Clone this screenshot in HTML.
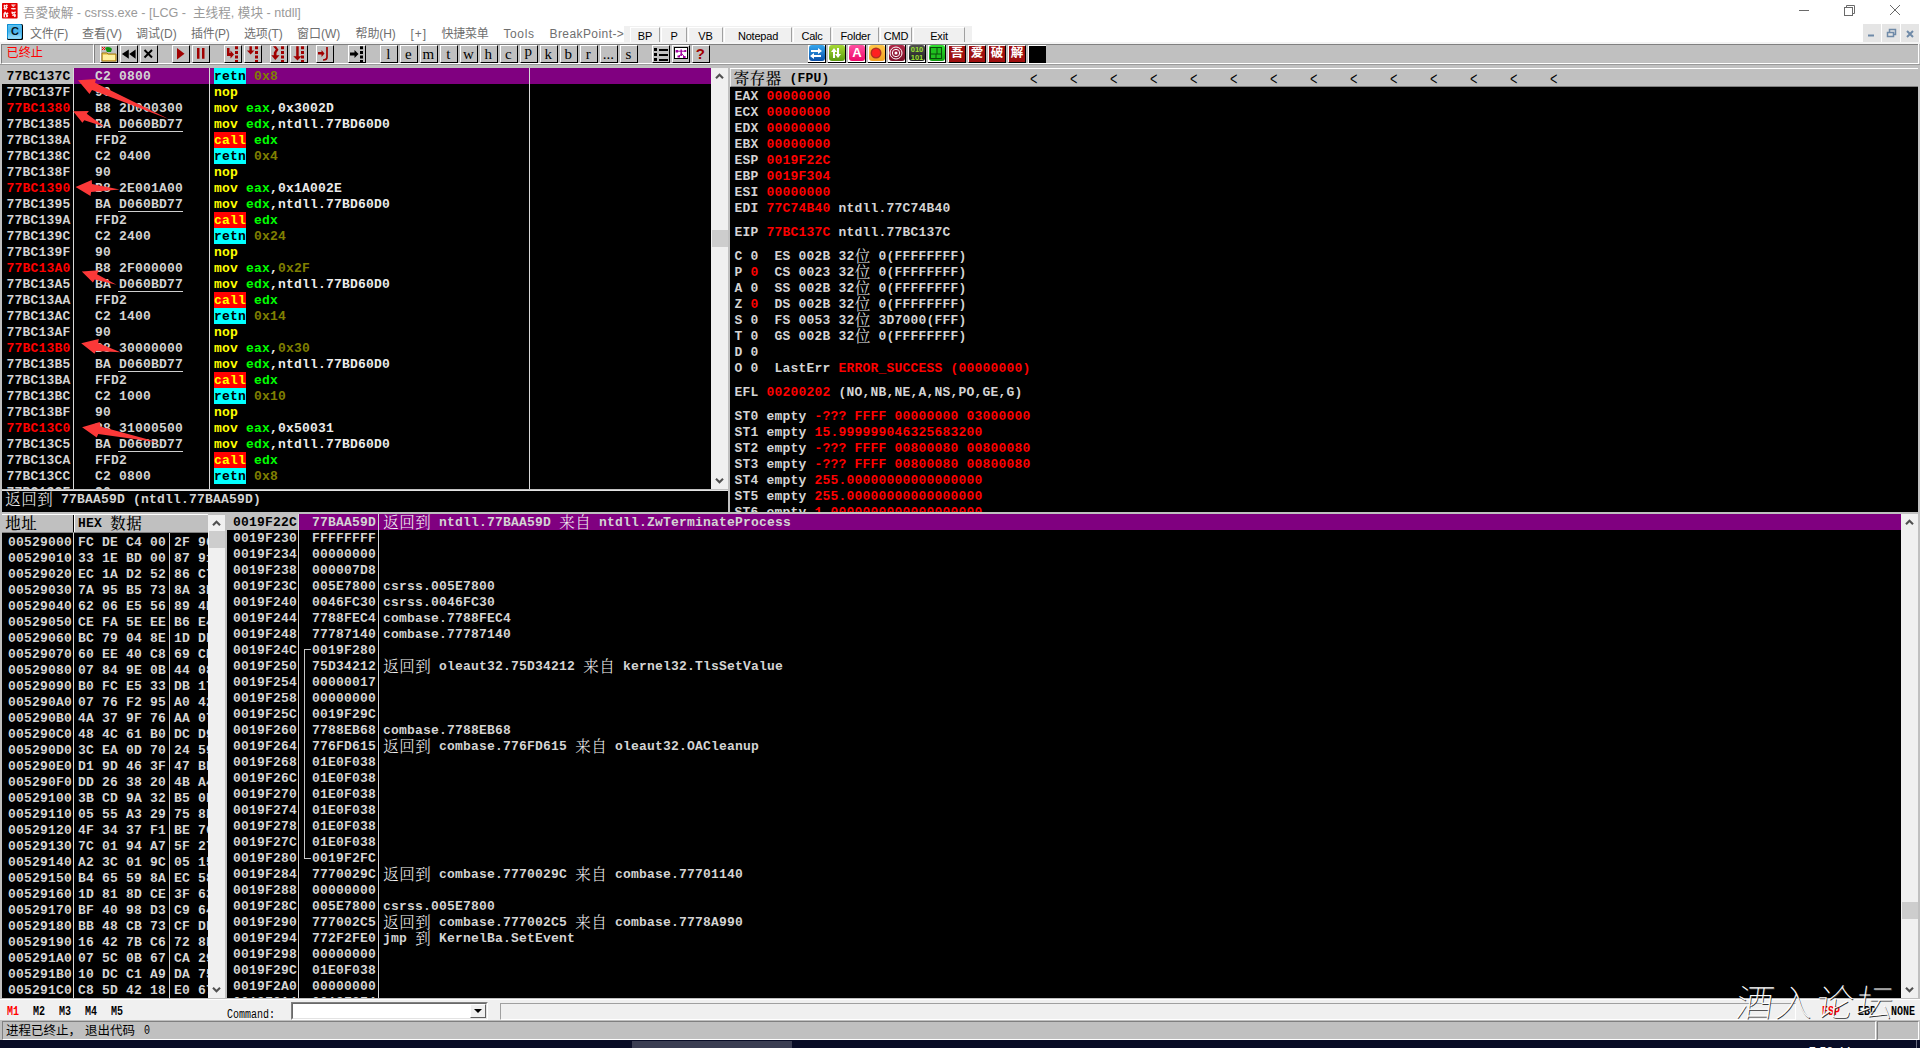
<!DOCTYPE html><html><head><meta charset="utf-8"><title>OllyDbg</title><style>
*{box-sizing:border-box;margin:0;padding:0}
html,body{width:1920px;height:1048px;overflow:hidden;background:#fff}
body{position:relative;font-family:"Liberation Sans","Noto Sans CJK SC",sans-serif;font-size:12px;color:#000}
.abs{position:absolute}
.mono{font-family:"Liberation Mono","Noto Serif CJK SC",monospace;font-weight:bold;font-size:13px;line-height:16px;white-space:pre;color:#d4d4d4;letter-spacing:0.2px}
.cj{font-family:"Liberation Serif","Noto Serif CJK SC","Noto Sans CJK SC",serif;font-weight:300;font-size:15.5px;display:inline-block;letter-spacing:0.5px;padding-left:0.25px;margin-right:-0.25px;line-height:16px;vertical-align:top;position:relative;top:0.3px;color:#f4f4f4}
.kk .cj{color:#000;font-weight:500}
.ss{position:absolute;font:12px/14px "Liberation Mono",monospace;transform:scaleX(.8333);transform-origin:0 0;white-space:pre;color:#000}
.row{position:absolute;left:0;height:16px;width:100%}
.row span.c{position:absolute;top:1px;height:16px}
.row span.bg{top:0}
.pane{position:absolute;background:#000;overflow:hidden}
.vl{position:absolute;width:1px;background:#d8d8d8;top:0;bottom:0}
.y{color:#ffff00}.g{color:#00ff00}.o{color:#808000}.w{color:#ececec}.r{color:#ff0000}.k{color:#000}
.call{background:#ff0000;color:#ffff00}
.retn{background:#00ffff;color:#000}
.sel{background:#800080}
.u{border-bottom:1px solid #d0d0d0;height:15px!important;margin-left:-1px;padding-left:1px}
.sb{position:absolute;background:#f0f0f0}
.sb .th{position:absolute;left:1px;right:0;background:#cdcdcd}
.sb svg{position:absolute;left:0}
.tb{position:absolute;top:45px;width:18px;height:18px;background:#c0c0c0;border:1px solid;border-color:#fff #000 #000 #fff;overflow:hidden}
.tb b{position:absolute;left:-0.7px;top:-0.4px;width:16px;text-align:center;font-family:"Liberation Serif",serif;font-weight:normal;font-size:15px;line-height:16px;color:#000}
.mb{position:absolute;top:27px;height:18px;background:#f0f0f0;border:1px solid;border-color:#fff #a0a0a0 #a0a0a0 #fff;font-size:11px;line-height:17px;text-align:center;color:#000;letter-spacing:-0.2px}
.menu span{position:absolute;top:25.5px;line-height:16px;font-size:12px;color:#6f6f6f;white-space:pre}
</style></head><body>
<div class="abs" style="left:0;top:0;width:1920px;height:44px;background:#fff"></div>
<svg class="abs" style="left:2px;top:3px" width="16" height="16" viewBox="0 0 16 16"><rect x="0" y="0" width="15.6" height="15.6" rx="0.8" fill="#e40000"/><g fill="#fff" opacity="0.92"><path d="M1.5 2.5l1-1 1 .8 1.2-1 1.3 1-1 1.2 1 1-1.2 1 .4 1.2-1.4-.3-1 .8-.6-1.2-1-.3.8-1.2z"/><path d="M9.2 1.6h4.6l-.6 1-1.2.2.4 1-1.5.4-.5-1.3-.9-.3zM9 5h4.500l.3 1.200-2 .2-2.500-.1z"/><path d="M1.500 10.500l1.600-2.200 1.300 1.600 1.500-.6.600 1.400-1.300.6 1 1.300-.500 1.700h-4.200z"/><path d="M9.500 8.500l2.300.6 1.700-.9.300 1.500-1.300.9 1.300 1 .1 1.800-1.500.8-.800-1.400-1.700.3.900-1.500-1.400-1.300z"/></g><g fill="#e40000"><rect x="3" y="11.500" width="1" height="2.500"/><rect x="10.800" y="2.600" width="0.800" height="0.800"/><rect x="3" y="3.400" width="1" height="1"/><rect x="11.300" y="10.300" width="0.900" height="0.900"/></g></svg>
<div class="abs" style="left:23px;top:4.5px;font-size:12.6px;line-height:17px;color:#9a9a9a;white-space:pre">吾愛破解 - csrss.exe - [LCG -  主线程, 模块 - ntdll]</div>
<svg class="abs" style="left:1790px;top:0" width="130" height="22" viewBox="0 0 130 22" fill="none" stroke="#6a6a6a" stroke-width="1"><path d="M9 10.5H19"/><rect x="54.5" y="7.5" width="8" height="8"/><path d="M56.5 7.5V5.5H64.5V13.5H62.5"/><path d="M100 5L110 15M110 5L100 15"/></svg>
<div class="abs" style="left:7px;top:24px;width:16px;height:16px;border-radius:1.5px;background:#000"></div><div class="abs" style="left:7px;top:24px;width:15px;height:15px;border-radius:1.5px;background:linear-gradient(#5cc0f0,#48b4ec 50%,#9adcf8);border:1px solid;border-color:#0a94dc #48b4ec #7fd0f4 #0a94dc"></div>
<div class="abs" style="left:7px;top:24px;width:16px;height:16px;font:bold 11px/15px 'Liberation Sans',sans-serif;color:#041420;text-align:center">C</div>
<div class="menu">
<span style="left:30px;letter-spacing:-0.3px">文件(F)</span>
<span style="left:82px;letter-spacing:0px">查看(V)</span>
<span style="left:136px;letter-spacing:0px">调试(D)</span>
<span style="left:191px;letter-spacing:-0.3px">插件(P)</span>
<span style="left:244px;letter-spacing:-0.15px">选项(T)</span>
<span style="left:297px;letter-spacing:0px">窗口(W)</span>
<span style="left:355.5px;letter-spacing:-0.1px">帮助(H)</span>
<span style="left:410.5px;letter-spacing:0.9px">[+]</span>
<span style="left:441.5px;letter-spacing:-0.25px">快捷菜单</span>
<span style="left:503.5px;letter-spacing:0.6px">Tools</span>
<span style="left:549.5px;letter-spacing:0.42px">BreakPoint-&gt;</span>
</div>
<div class="abs" style="left:624px;top:26px;width:348px;height:19px;background:#f0f0f0"></div>
<div class="mb" style="left:630px;width:30px">BP</div>
<div class="mb" style="left:661px;width:26px">P</div>
<div class="mb" style="left:688px;width:35px">VB</div>
<div class="mb" style="left:724px;width:68px">Notepad</div>
<div class="mb" style="left:793px;width:38px">Calc</div>
<div class="mb" style="left:832px;width:47px">Folder</div>
<div class="mb" style="left:880px;width:32px">CMD</div>
<div class="mb" style="left:913px;width:52px">Exit</div>
<div class="abs" style="left:1863px;top:24px;width:18px;height:18px;background:#e5e5e5"></div>
<div class="abs" style="left:1882px;top:24px;width:18px;height:18px;background:#e5e5e5"></div>
<div class="abs" style="left:1901px;top:24px;width:18px;height:18px;background:#e5e5e5"></div>
<svg class="abs" style="left:1863px;top:24px" width="56" height="18" viewBox="0 0 56 18" fill="none" stroke="#6f8aa8"><path d="M5 11.5H11" stroke-width="2"/><path d="M24.5 8.5H30.5V12.5H24.5Z M26.5 8V5.5H32.5V10.5H31" stroke-width="1.5"/><path d="M44 7L50 13M50 7L44 13" stroke-width="2"/></svg>
<div class="abs" style="left:0;top:42px;width:1920px;height:27px;background:#c0c0c0"></div>
<div class="abs" style="left:0;top:42px;width:1920px;height:2px;background:#f4f4f4"></div>
<div class="abs" style="left:0;top:44px;width:1918px;height:1px;background:#808080"></div>
<div class="abs" style="left:0;top:63px;width:1919px;height:1px;background:#fff"></div>
<div class="abs" style="left:1918px;top:44px;width:1px;height:20px;background:#fff"></div>
<div class="abs" style="left:0;top:64px;width:1920px;height:1px;background:#9a9a9a"></div>
<div class="abs" style="left:730px;top:68px;width:1188px;height:1px;background:#fff"></div>
<div class="abs" style="left:1px;top:44px;width:93px;height:20px;border:1px solid;border-color:#808080 #fff #fff #808080"></div>
<div class="abs" style="left:6.5px;top:45.200px;font-size:12.200px;line-height:17px;color:#ff0000;font-family:'Liberation Sans','Noto Sans CJK SC',sans-serif;font-weight:400;letter-spacing:0">已终止</div>
<div class="abs" style="left:94px;top:44px;width:1px;height:19px;background:#808080"></div>
<div class="abs" style="left:0;top:42px;width:1px;height:22px;background:#f0f0f0"></div>
<div class="tb" style="left:100px"><svg width="16" height="16" viewBox="0 0 16 16" style="position:absolute;left:0;top:0" ><path d="M1 7h5l1 1h8v7H1z" fill="#f4d060" stroke="#a07810" stroke-width="1"/><path d="M2 9h12v5H2z" fill="#fff0a0"/><path d="M4 2c2-2 6-1 7 1l-1 3H6z" fill="#109010"/><path d="M1 1l3 3M1 4l3-3" stroke="#f00" stroke-width="1"/></svg></div>
<div class="tb" style="left:120px"><svg width="16" height="16" viewBox="0 0 16 16" style="position:absolute;left:0;top:0" ><path d="M7.8 3.4v9.4L0.9 8.1zM14.6 3.4v9.4L8.2 8.1z" fill="#000"/></svg></div>
<div class="tb" style="left:140px"><svg width="16" height="16" viewBox="0 0 16 16" style="position:absolute;left:0;top:0" ><path d="M3.5 4l7.5 7.5M11 4l-7.5 7.5" stroke="#000" stroke-width="2"/></svg></div>
<div class="tb" style="left:172px"><svg width="16" height="16" viewBox="0 0 16 16" style="position:absolute;left:0;top:0" ><path d="M4 2v11.5l7.5-5.75z" fill="#a00000"/></svg></div>
<div class="tb" style="left:192px"><svg width="16" height="16" viewBox="0 0 16 16" style="position:absolute;left:0;top:0" ><path d="M4 2h2.5v10.8H4zM9 2h2.5v10.8H9z" fill="#a00000"/></svg></div>
<div class="tb" style="left:224px"><svg width="16" height="16" viewBox="0 0 16 16" style="position:absolute;left:0;top:0" ><path d="M2 2h2.5v5h1V4.5L9 8.5l-3.5 4V10H2z" fill="#a00000"/><path d="M10 0.3h3v3h-3zM10 4.9h3v3h-3zM10 9.5h3v3h-3zM10 14.1h3v2h-3z" fill="#a00000"/></svg></div>
<div class="tb" style="left:244px"><svg width="16" height="16" viewBox="0 0 16 16" style="position:absolute;left:0;top:0" ><path d="M4.4 0.3h2.5v4.3h2.5L5.65 8.6 1.9 4.6h2.5z" fill="#a00000"/><path d="M10 0.3h3v3h-3zM10 4.9h3v3h-3zM10 9.5h3v3h-3zM10 14.1h3v2h-3z" fill="#a00000"/></svg></div>
<div class="tb" style="left:270px"><svg width="16" height="16" viewBox="0 0 16 16" style="position:absolute;left:0;top:0" ><path d="M2 0.3h3l2.5 3.5-2 3v2.5h3L4.3 14 0.3 9.3h2.5V6.5l2-3z" fill="#a00000"/><path d="M10 0.3h3v3h-3zM10 4.9h3v3h-3zM10 9.5h3v3h-3zM10 14.1h3v2h-3z" fill="#a00000"/></svg></div>
<div class="tb" style="left:290px"><svg width="16" height="16" viewBox="0 0 16 16" style="position:absolute;left:0;top:0" ><path d="M5.2 0.3h2.5v10h2.8L6.5 14.6 2.3 10.3h2.9z" fill="#a00000"/><path d="M10 0.3h3v3h-3zM10 4.9h3v3h-3zM10 9.5h3v3h-3zM10 14.1h3v2h-3z" fill="#a00000"/></svg></div>
<div class="tb" style="left:316px"><svg width="16" height="16" viewBox="0 0 16 16" style="position:absolute;left:0;top:0" ><path d="M1 6h3.5V4l3 3.5-3 3.5V8.5H1z" fill="#a00000"/><path d="M10 1v10q0 3-4 3" stroke="#a00000" stroke-width="1.7" fill="none"/></svg></div>
<div class="tb" style="left:348px"><svg width="16" height="16" viewBox="0 0 16 16" style="position:absolute;left:0;top:0" ><path d="M1 6.5h4.5V4l4 4-4 4V9.5H1z" fill="#000"/><path d="M11 0.3h3v3h-3zM11 4.9h3v3h-3zM11 9.5h3v3h-3zM11 14.1h3v2h-3z" fill="#000"/></svg></div>
<div class="tb" style="left:380px"><b>l</b></div>
<div class="tb" style="left:400px"><b>e</b></div>
<div class="tb" style="left:420px"><b>m</b></div>
<div class="tb" style="left:440px"><b>t</b></div>
<div class="tb" style="left:460px"><b>w</b></div>
<div class="tb" style="left:480px"><b>h</b></div>
<div class="tb" style="left:500px"><b>c</b></div>
<div class="tb" style="left:520px"><b style="top:-3.500px">p</b></div>
<div class="tb" style="left:540px"><b>k</b></div>
<div class="tb" style="left:560px"><b>b</b></div>
<div class="tb" style="left:580px"><b>r</b></div>
<div class="tb" style="left:600px"><b>...</b></div>
<div class="tb" style="left:620px"><b>s</b></div>
<div class="tb" style="left:652px"><svg width="16" height="16" viewBox="0 0 16 16" style="position:absolute;left:0;top:0" ><path d="M1 2h3v3H1zM6 3h9v2H6zM1 7h3v3H1zM6 8h9v2H6zM1 12h3v3H1zM6 13h9v2H6z" fill="#000"/></svg></div>
<div class="tb" style="left:672px"><svg width="16" height="16" viewBox="0 0 16 16" style="position:absolute;left:0;top:0" ><rect x="1.500" y="1.500" width="13" height="11" fill="#fff" stroke="#000"/><g fill="#a000a0"><rect x="2.600" y="4" width="2.500" height="2.500"/><rect x="11.300" y="4" width="2" height="2"/><rect x="4.500" y="9.500" width="2.500" height="2"/><rect x="10" y="10" width="2.600" height="2"/><rect x="7.500" y="3.500" width="1.400" height="6.500"/></g><path d="M4 5.200h8.500M8.200 7l3 3.500M8.200 8.500L6 10" stroke="#a000a0" stroke-width="1" fill="none"/></svg></div>
<div class="tb" style="left:692px"><b style="color:#a00000;font-family:'Liberation Sans',sans-serif;font-weight:bold;font-size:15px">?</b></div>
<div class="abs" style="left:808px;top:45px;width:18px;height:18px;background:#fff;border-right:1px solid #000;border-bottom:1px solid #000"><div style="position:absolute;left:1px;top:0;width:16px;height:16px;border-radius:3px;background:linear-gradient(#35a7ee,#0a4fa8)"></div><svg width="16" height="16" viewBox="0 0 16 16" style="position:absolute;left:0;top:0" style="left:1px"><path d="M3 5h7V3l4 3-4 3V7H3zM13 10H6V8l-4 3 4 3v-2h7z" fill="#fff"/></svg></div>
<div class="abs" style="left:828px;top:45px;width:18px;height:18px;background:#fff;border-right:1px solid #000;border-bottom:1px solid #000"><div style="position:absolute;left:1px;top:0;width:16px;height:16px;border-radius:3px;background:linear-gradient(#a6d934,#5c9c10)"></div><svg width="16" height="16" viewBox="0 0 16 16" style="position:absolute;left:0;top:0" style="left:1px"><path d="M5 13V7H3l3-4 3 4H7v6zM9 3v6H7l3 4 3-4h-2V3z" fill="#fff"/></svg></div>
<div class="abs" style="left:848px;top:45px;width:18px;height:18px;background:#fff;border-right:1px solid #000;border-bottom:1px solid #000"><div style="position:absolute;left:1px;top:0;width:16px;height:16px;border-radius:3px;background:linear-gradient(#ff4fa0,#ee0a6a)"></div><div style="position:absolute;left:1px;top:0;width:16px;height:16px;font:bold 13px/16px 'Liberation Sans',sans-serif;color:#fff;text-align:center">A</div></div>
<div class="abs" style="left:868px;top:45px;width:18px;height:18px;background:#fff;border-right:1px solid #000;border-bottom:1px solid #000"><div style="position:absolute;left:1px;top:0;width:16px;height:16px;border-radius:3px;background:linear-gradient(#ffc84a,#f0a020)"></div><svg width="16" height="16" viewBox="0 0 16 16" style="position:absolute;left:0;top:0" style="left:1px"><circle cx="8" cy="8" r="5.5" fill="#b03020"/><circle cx="8" cy="8" r="4" fill="#ff2020"/></svg></div>
<div class="abs" style="left:888px;top:45px;width:18px;height:18px;background:#fff;border-right:1px solid #000;border-bottom:1px solid #000"><div style="position:absolute;left:1px;top:0;width:16px;height:16px;border-radius:3px;background:linear-gradient(#b02848,#7a1028)"></div><svg width="16" height="16" viewBox="0 0 16 16" style="position:absolute;left:0;top:0" style="left:1px"><circle cx="8" cy="8" r="6" fill="none" stroke="#fff"/><circle cx="8" cy="8" r="3.7" fill="none" stroke="#fff"/><circle cx="8" cy="8" r="1.5" fill="#fff"/></svg></div>
<div class="abs" style="left:908px;top:45px;width:18px;height:18px;background:#fff;border-right:1px solid #000;border-bottom:1px solid #000"><div style="position:absolute;left:1px;top:0;width:16px;height:16px;border-radius:3px;background:linear-gradient(#505050,#202020)"></div><div style="position:absolute;left:1px;top:0;width:16px;height:16px;font:bold 7.5px/7.5px 'Liberation Sans',sans-serif;color:#9be030;text-align:center;padding-top:1px">010<br>101</div></div>
<div class="abs" style="left:928px;top:45px;width:18px;height:18px;background:#fff;border-right:1px solid #000;border-bottom:1px solid #000"><div style="position:absolute;left:1px;top:0;width:16px;height:16px;border-radius:3px;background:linear-gradient(#30e030,#10a010)"></div><svg width="16" height="16" viewBox="0 0 16 16" style="position:absolute;left:0;top:0" style="left:1px"><rect x="2.5" y="2.5" width="11" height="11" fill="#20c020" stroke="#0a4a0a"/><path d="M3 9h10M9 3v6M8 9v4" stroke="#0a4a0a"/></svg></div>
<div class="abs" style="left:948px;top:45px;width:18px;height:18px;background:#a01010;border-right:1px solid #000;border-bottom:1px solid #000;border-left:1px solid #fff;border-top:1px solid #fff;font:bold 12.5px/15px 'Liberation Sans','Noto Sans CJK SC',sans-serif;color:#fff;text-align:center;overflow:hidden">吾</div>
<div class="abs" style="left:968px;top:45px;width:18px;height:18px;background:#a01010;border-right:1px solid #000;border-bottom:1px solid #000;border-left:1px solid #fff;border-top:1px solid #fff;font:bold 12.5px/15px 'Liberation Sans','Noto Sans CJK SC',sans-serif;color:#fff;text-align:center;overflow:hidden">爱</div>
<div class="abs" style="left:988px;top:45px;width:18px;height:18px;background:#a01010;border-right:1px solid #000;border-bottom:1px solid #000;border-left:1px solid #fff;border-top:1px solid #fff;font:bold 12.5px/15px 'Liberation Sans','Noto Sans CJK SC',sans-serif;color:#fff;text-align:center;overflow:hidden">破</div>
<div class="abs" style="left:1008px;top:45px;width:18px;height:18px;background:#a01010;border-right:1px solid #000;border-bottom:1px solid #000;border-left:1px solid #fff;border-top:1px solid #fff;font:bold 12.5px/15px 'Liberation Sans','Noto Sans CJK SC',sans-serif;color:#fff;text-align:center;overflow:hidden">解</div>
<div class="abs" style="left:1028px;top:45px;width:18px;height:18px;background:#000;border-left:1px solid #fff;border-top:1px solid #fff"></div>
<div class="abs" style="left:0;top:69px;width:1920px;height:931px;background:#c0c0c0"></div>
<div class="pane mono" style="left:2px;top:68px;width:709px;height:421px">
<div class="row sel" style="top:0"></div><div class="abs" style="left:0;top:0;width:71px;height:16px;background:#c0c0c0"></div>
<div class="row" style="top:0px">
<span class="c k" style="left:4.5px">77BC137C</span>
<span class="c" style="left:93px">C2 0800</span>
<span class="c bg retn" style="left:212px;line-height:18px">retn</span><span class="c o" style="left:252px">0x8</span>
</div>
<div class="row" style="top:16px">
<span class="c " style="left:4.5px">77BC137F</span>
<span class="c" style="left:93px">90</span>
<span class="c y" style="left:212px">nop</span>
</div>
<div class="row" style="top:32px">
<span class="c r" style="left:4.5px">77BC1380</span>
<span class="c" style="left:93px">B8 2D000300</span>
<span class="c y" style="left:212px">mov</span><span class="c g" style="left:244px">eax</span><span class="c w" style="left:268px">,</span><span class="c w" style="left:276px">0x3002D</span>
</div>
<div class="row" style="top:48px">
<span class="c " style="left:4.5px">77BC1385</span>
<span class="c" style="left:93px">BA </span><span class="c u" style="left:117px">D060BD77</span>
<span class="c y" style="left:212px">mov</span><span class="c g" style="left:244px">edx</span><span class="c w" style="left:268px">,</span><span class="c w" style="left:276px">ntdll.77BD60D0</span>
</div>
<div class="row" style="top:64px">
<span class="c " style="left:4.5px">77BC138A</span>
<span class="c" style="left:93px">FFD2</span>
<span class="c bg call" style="left:212px;line-height:18px">call</span><span class="c g" style="left:252px">edx</span>
</div>
<div class="row" style="top:80px">
<span class="c " style="left:4.5px">77BC138C</span>
<span class="c" style="left:93px">C2 0400</span>
<span class="c bg retn" style="left:212px;line-height:18px">retn</span><span class="c o" style="left:252px">0x4</span>
</div>
<div class="row" style="top:96px">
<span class="c " style="left:4.5px">77BC138F</span>
<span class="c" style="left:93px">90</span>
<span class="c y" style="left:212px">nop</span>
</div>
<div class="row" style="top:112px">
<span class="c r" style="left:4.5px">77BC1390</span>
<span class="c" style="left:93px">B8 2E001A00</span>
<span class="c y" style="left:212px">mov</span><span class="c g" style="left:244px">eax</span><span class="c w" style="left:268px">,</span><span class="c w" style="left:276px">0x1A002E</span>
</div>
<div class="row" style="top:128px">
<span class="c " style="left:4.5px">77BC1395</span>
<span class="c" style="left:93px">BA </span><span class="c u" style="left:117px">D060BD77</span>
<span class="c y" style="left:212px">mov</span><span class="c g" style="left:244px">edx</span><span class="c w" style="left:268px">,</span><span class="c w" style="left:276px">ntdll.77BD60D0</span>
</div>
<div class="row" style="top:144px">
<span class="c " style="left:4.5px">77BC139A</span>
<span class="c" style="left:93px">FFD2</span>
<span class="c bg call" style="left:212px;line-height:18px">call</span><span class="c g" style="left:252px">edx</span>
</div>
<div class="row" style="top:160px">
<span class="c " style="left:4.5px">77BC139C</span>
<span class="c" style="left:93px">C2 2400</span>
<span class="c bg retn" style="left:212px;line-height:18px">retn</span><span class="c o" style="left:252px">0x24</span>
</div>
<div class="row" style="top:176px">
<span class="c " style="left:4.5px">77BC139F</span>
<span class="c" style="left:93px">90</span>
<span class="c y" style="left:212px">nop</span>
</div>
<div class="row" style="top:192px">
<span class="c r" style="left:4.5px">77BC13A0</span>
<span class="c" style="left:93px">B8 2F000000</span>
<span class="c y" style="left:212px">mov</span><span class="c g" style="left:244px">eax</span><span class="c w" style="left:268px">,</span><span class="c o" style="left:276px">0x2F</span>
</div>
<div class="row" style="top:208px">
<span class="c " style="left:4.5px">77BC13A5</span>
<span class="c" style="left:93px">BA </span><span class="c u" style="left:117px">D060BD77</span>
<span class="c y" style="left:212px">mov</span><span class="c g" style="left:244px">edx</span><span class="c w" style="left:268px">,</span><span class="c w" style="left:276px">ntdll.77BD60D0</span>
</div>
<div class="row" style="top:224px">
<span class="c " style="left:4.5px">77BC13AA</span>
<span class="c" style="left:93px">FFD2</span>
<span class="c bg call" style="left:212px;line-height:18px">call</span><span class="c g" style="left:252px">edx</span>
</div>
<div class="row" style="top:240px">
<span class="c " style="left:4.5px">77BC13AC</span>
<span class="c" style="left:93px">C2 1400</span>
<span class="c bg retn" style="left:212px;line-height:18px">retn</span><span class="c o" style="left:252px">0x14</span>
</div>
<div class="row" style="top:256px">
<span class="c " style="left:4.5px">77BC13AF</span>
<span class="c" style="left:93px">90</span>
<span class="c y" style="left:212px">nop</span>
</div>
<div class="row" style="top:272px">
<span class="c r" style="left:4.5px">77BC13B0</span>
<span class="c" style="left:93px">B8 30000000</span>
<span class="c y" style="left:212px">mov</span><span class="c g" style="left:244px">eax</span><span class="c w" style="left:268px">,</span><span class="c o" style="left:276px">0x30</span>
</div>
<div class="row" style="top:288px">
<span class="c " style="left:4.5px">77BC13B5</span>
<span class="c" style="left:93px">BA </span><span class="c u" style="left:117px">D060BD77</span>
<span class="c y" style="left:212px">mov</span><span class="c g" style="left:244px">edx</span><span class="c w" style="left:268px">,</span><span class="c w" style="left:276px">ntdll.77BD60D0</span>
</div>
<div class="row" style="top:304px">
<span class="c " style="left:4.5px">77BC13BA</span>
<span class="c" style="left:93px">FFD2</span>
<span class="c bg call" style="left:212px;line-height:18px">call</span><span class="c g" style="left:252px">edx</span>
</div>
<div class="row" style="top:320px">
<span class="c " style="left:4.5px">77BC13BC</span>
<span class="c" style="left:93px">C2 1000</span>
<span class="c bg retn" style="left:212px;line-height:18px">retn</span><span class="c o" style="left:252px">0x10</span>
</div>
<div class="row" style="top:336px">
<span class="c " style="left:4.5px">77BC13BF</span>
<span class="c" style="left:93px">90</span>
<span class="c y" style="left:212px">nop</span>
</div>
<div class="row" style="top:352px">
<span class="c r" style="left:4.5px">77BC13C0</span>
<span class="c" style="left:93px">B8 31000500</span>
<span class="c y" style="left:212px">mov</span><span class="c g" style="left:244px">eax</span><span class="c w" style="left:268px">,</span><span class="c w" style="left:276px">0x50031</span>
</div>
<div class="row" style="top:368px">
<span class="c " style="left:4.5px">77BC13C5</span>
<span class="c" style="left:93px">BA </span><span class="c u" style="left:117px">D060BD77</span>
<span class="c y" style="left:212px">mov</span><span class="c g" style="left:244px">edx</span><span class="c w" style="left:268px">,</span><span class="c w" style="left:276px">ntdll.77BD60D0</span>
</div>
<div class="row" style="top:384px">
<span class="c " style="left:4.5px">77BC13CA</span>
<span class="c" style="left:93px">FFD2</span>
<span class="c bg call" style="left:212px;line-height:18px">call</span><span class="c g" style="left:252px">edx</span>
</div>
<div class="row" style="top:400px">
<span class="c " style="left:4.5px">77BC13CC</span>
<span class="c" style="left:93px">C2 0800</span>
<span class="c bg retn" style="left:212px;line-height:18px">retn</span><span class="c o" style="left:252px">0x8</span>
</div>
<div class="row" style="top:416px">
<span class="c " style="left:4.5px">77BC13CF</span>
<span class="c" style="left:93px">90</span>
<span class="c y" style="left:212px">nop</span>
</div>
<div class="vl" style="left:71px"></div><div class="vl" style="left:207px"></div><div class="vl" style="left:527px"></div>
</div>
<div class="sb" style="left:711px;top:68px;width:17px;height:421px"><div style="position:absolute;left:0;top:0"><svg width="17" height="17" viewBox="0 0 17 17" fill="none" stroke="#505050" stroke-width="2.1"><path d="M5 10.3 L8.5 6.8 L12 10.3"/></svg></div><div style="position:absolute;left:0;bottom:0;height:17px"><svg width="17" height="17" viewBox="0 0 17 17" fill="none" stroke="#505050" stroke-width="2.1"><path d="M5 6.8 L8.5 10.3 L12 6.8"/></svg></div><div class="th" style="top:162px;height:17px"></div></div>
<div class="abs" style="left:2px;top:490px;width:726px;height:1px;background:#e4e4e4"></div>
<div class="pane mono" style="left:2px;top:491px;width:726px;height:21px"><div class="row" style="top:0"><span class="c" style="left:3px"><span class="cj">返回到</span> 77BAA59D (ntdll.77BAA59D)</span></div></div>
<div class="abs mono kk" style="left:730px;top:69px;width:1188px;height:18px;background:#c0c0c0;color:#000;border-left:1px solid #ececec;border-bottom:1px solid #808080"><span class="abs" style="left:2.500px;top:2px"><span class="cj">寄存器</span> (FPU)</span>
<span class="abs" style="left:298px;top:2.5px;font-weight:normal;font-size:16px;line-height:17px;letter-spacing:0;transform:scale(.78,1.15)">&lt;</span>
<span class="abs" style="left:338px;top:2.5px;font-weight:normal;font-size:16px;line-height:17px;letter-spacing:0;transform:scale(.78,1.15)">&lt;</span>
<span class="abs" style="left:378px;top:2.5px;font-weight:normal;font-size:16px;line-height:17px;letter-spacing:0;transform:scale(.78,1.15)">&lt;</span>
<span class="abs" style="left:418px;top:2.5px;font-weight:normal;font-size:16px;line-height:17px;letter-spacing:0;transform:scale(.78,1.15)">&lt;</span>
<span class="abs" style="left:458px;top:2.5px;font-weight:normal;font-size:16px;line-height:17px;letter-spacing:0;transform:scale(.78,1.15)">&lt;</span>
<span class="abs" style="left:498px;top:2.5px;font-weight:normal;font-size:16px;line-height:17px;letter-spacing:0;transform:scale(.78,1.15)">&lt;</span>
<span class="abs" style="left:538px;top:2.5px;font-weight:normal;font-size:16px;line-height:17px;letter-spacing:0;transform:scale(.78,1.15)">&lt;</span>
<span class="abs" style="left:578px;top:2.5px;font-weight:normal;font-size:16px;line-height:17px;letter-spacing:0;transform:scale(.78,1.15)">&lt;</span>
<span class="abs" style="left:618px;top:2.5px;font-weight:normal;font-size:16px;line-height:17px;letter-spacing:0;transform:scale(.78,1.15)">&lt;</span>
<span class="abs" style="left:658px;top:2.5px;font-weight:normal;font-size:16px;line-height:17px;letter-spacing:0;transform:scale(.78,1.15)">&lt;</span>
<span class="abs" style="left:698px;top:2.5px;font-weight:normal;font-size:16px;line-height:17px;letter-spacing:0;transform:scale(.78,1.15)">&lt;</span>
<span class="abs" style="left:738px;top:2.5px;font-weight:normal;font-size:16px;line-height:17px;letter-spacing:0;transform:scale(.78,1.15)">&lt;</span>
<span class="abs" style="left:778px;top:2.5px;font-weight:normal;font-size:16px;line-height:17px;letter-spacing:0;transform:scale(.78,1.15)">&lt;</span>
<span class="abs" style="left:818px;top:2.5px;font-weight:normal;font-size:16px;line-height:17px;letter-spacing:0;transform:scale(.78,1.15)">&lt;</span>
</div>
<div class="pane mono" style="left:730px;top:87px;width:1188px;height:425px">
<div class="row" style="top:1px">
<span class="c " style="left:4.5px">EAX</span>
<span class="c r" style="left:36.5px">00000000</span>
</div>
<div class="row" style="top:17px">
<span class="c " style="left:4.5px">ECX</span>
<span class="c r" style="left:36.5px">00000000</span>
</div>
<div class="row" style="top:33px">
<span class="c " style="left:4.5px">EDX</span>
<span class="c r" style="left:36.5px">00000000</span>
</div>
<div class="row" style="top:49px">
<span class="c " style="left:4.5px">EBX</span>
<span class="c r" style="left:36.5px">00000000</span>
</div>
<div class="row" style="top:65px">
<span class="c " style="left:4.5px">ESP</span>
<span class="c r" style="left:36.5px">0019F22C</span>
</div>
<div class="row" style="top:81px">
<span class="c " style="left:4.5px">EBP</span>
<span class="c r" style="left:36.5px">0019F304</span>
</div>
<div class="row" style="top:97px">
<span class="c " style="left:4.5px">ESI</span>
<span class="c r" style="left:36.5px">00000000</span>
</div>
<div class="row" style="top:113px">
<span class="c " style="left:4.5px">EDI</span>
<span class="c r" style="left:36.5px">77C74B40</span>
<span class="c " style="left:108.5px">ntdll.77C74B40</span>
</div>
<div class="row" style="top:137px">
<span class="c " style="left:4.5px">EIP</span>
<span class="c r" style="left:36.5px">77BC137C</span>
<span class="c " style="left:108.5px">ntdll.77BC137C</span>
</div>
<div class="row" style="top:161px">
<span class="c " style="left:4.5px">C</span>
<span class="c " style="left:20.5px">0</span>
<span class="c " style="left:44.5px">ES</span>
<span class="c " style="left:68.5px">002B</span>
<span class="c " style="left:108.5px">32<span class="cj">位</span></span>
<span class="c " style="left:148.5px">0(FFFFFFFF)</span>
</div>
<div class="row" style="top:177px">
<span class="c " style="left:4.5px">P</span>
<span class="c r" style="left:20.5px">0</span>
<span class="c " style="left:44.5px">CS</span>
<span class="c " style="left:68.5px">0023</span>
<span class="c " style="left:108.5px">32<span class="cj">位</span></span>
<span class="c " style="left:148.5px">0(FFFFFFFF)</span>
</div>
<div class="row" style="top:193px">
<span class="c " style="left:4.5px">A</span>
<span class="c " style="left:20.5px">0</span>
<span class="c " style="left:44.5px">SS</span>
<span class="c " style="left:68.5px">002B</span>
<span class="c " style="left:108.5px">32<span class="cj">位</span></span>
<span class="c " style="left:148.5px">0(FFFFFFFF)</span>
</div>
<div class="row" style="top:209px">
<span class="c " style="left:4.5px">Z</span>
<span class="c r" style="left:20.5px">0</span>
<span class="c " style="left:44.5px">DS</span>
<span class="c " style="left:68.5px">002B</span>
<span class="c " style="left:108.5px">32<span class="cj">位</span></span>
<span class="c " style="left:148.5px">0(FFFFFFFF)</span>
</div>
<div class="row" style="top:225px">
<span class="c " style="left:4.5px">S</span>
<span class="c " style="left:20.5px">0</span>
<span class="c " style="left:44.5px">FS</span>
<span class="c " style="left:68.5px">0053</span>
<span class="c " style="left:108.5px">32<span class="cj">位</span></span>
<span class="c " style="left:148.5px">3D7000(FFF)</span>
</div>
<div class="row" style="top:241px">
<span class="c " style="left:4.5px">T</span>
<span class="c " style="left:20.5px">0</span>
<span class="c " style="left:44.5px">GS</span>
<span class="c " style="left:68.5px">002B</span>
<span class="c " style="left:108.5px">32<span class="cj">位</span></span>
<span class="c " style="left:148.5px">0(FFFFFFFF)</span>
</div>
<div class="row" style="top:257px">
<span class="c " style="left:4.5px">D</span>
<span class="c " style="left:20.5px">0</span>
</div>
<div class="row" style="top:273px">
<span class="c " style="left:4.5px">O</span>
<span class="c " style="left:20.5px">0</span>
<span class="c " style="left:44.5px">LastErr</span>
<span class="c r" style="left:108.5px">ERROR_SUCCESS (00000000)</span>
</div>
<div class="row" style="top:297px">
<span class="c " style="left:4.5px">EFL</span>
<span class="c r" style="left:36.5px">00200202</span>
<span class="c " style="left:108.5px">(NO,NB,NE,A,NS,PO,GE,G)</span>
</div>
<div class="row" style="top:321px">
<span class="c " style="left:4.5px">ST0</span>
<span class="c " style="left:36.5px">empty</span>
<span class="c r" style="left:84.5px">-??? FFFF 00000000 03000000</span>
</div>
<div class="row" style="top:337px">
<span class="c " style="left:4.5px">ST1</span>
<span class="c " style="left:36.5px">empty</span>
<span class="c r" style="left:84.5px">15.999999046325683200</span>
</div>
<div class="row" style="top:353px">
<span class="c " style="left:4.5px">ST2</span>
<span class="c " style="left:36.5px">empty</span>
<span class="c r" style="left:84.5px">-??? FFFF 00800080 00800080</span>
</div>
<div class="row" style="top:369px">
<span class="c " style="left:4.5px">ST3</span>
<span class="c " style="left:36.5px">empty</span>
<span class="c r" style="left:84.5px">-??? FFFF 00800080 00800080</span>
</div>
<div class="row" style="top:385px">
<span class="c " style="left:4.5px">ST4</span>
<span class="c " style="left:36.5px">empty</span>
<span class="c r" style="left:84.5px">255.00000000000000000</span>
</div>
<div class="row" style="top:401px">
<span class="c " style="left:4.5px">ST5</span>
<span class="c " style="left:36.5px">empty</span>
<span class="c r" style="left:84.5px">255.00000000000000000</span>
</div>
<div class="row" style="top:417px">
<span class="c " style="left:4.5px">ST6</span>
<span class="c " style="left:36.5px">empty</span>
<span class="c r" style="left:84.5px">1.0000000000000000000</span>
</div>
</div>
<div class="abs mono kk" style="left:2px;top:514px;width:206px;height:19px;background:#c0c0c0;color:#000;border-top:1px solid #fff;border-bottom:1px solid #808080;overflow:hidden"><span class="abs" style="left:3px;top:1px"><span class="cj">地址</span></span><span class="abs" style="left:76px;top:1px">HEX <span class="cj">数据</span></span><div class="abs" style="left:71px;top:0;width:1px;height:18px;background:#000"></div><div class="abs" style="left:72px;top:0;width:1px;height:18px;background:#fff"></div></div>
<div class="pane mono" style="left:2px;top:533px;width:206px;height:465px">
<div class="row" style="top:1px"><span class="c" style="left:6px">00529000</span><span class="c" style="left:76px">FC DE C4 00</span><span class="c" style="left:172px">2F 90</span></div>
<div class="row" style="top:17px"><span class="c" style="left:6px">00529010</span><span class="c" style="left:76px">33 1E BD 00</span><span class="c" style="left:172px">87 91</span></div>
<div class="row" style="top:33px"><span class="c" style="left:6px">00529020</span><span class="c" style="left:76px">EC 1A D2 52</span><span class="c" style="left:172px">86 C7</span></div>
<div class="row" style="top:49px"><span class="c" style="left:6px">00529030</span><span class="c" style="left:76px">7A 95 B5 73</span><span class="c" style="left:172px">8A 3E</span></div>
<div class="row" style="top:65px"><span class="c" style="left:6px">00529040</span><span class="c" style="left:76px">62 06 E5 56</span><span class="c" style="left:172px">89 4B</span></div>
<div class="row" style="top:81px"><span class="c" style="left:6px">00529050</span><span class="c" style="left:76px">CE FA 5E EE</span><span class="c" style="left:172px">B6 E4</span></div>
<div class="row" style="top:97px"><span class="c" style="left:6px">00529060</span><span class="c" style="left:76px">BC 79 04 8E</span><span class="c" style="left:172px">1D DF</span></div>
<div class="row" style="top:113px"><span class="c" style="left:6px">00529070</span><span class="c" style="left:76px">60 EE 40 C8</span><span class="c" style="left:172px">69 CB</span></div>
<div class="row" style="top:129px"><span class="c" style="left:6px">00529080</span><span class="c" style="left:76px">07 84 9E 0B</span><span class="c" style="left:172px">44 08</span></div>
<div class="row" style="top:145px"><span class="c" style="left:6px">00529090</span><span class="c" style="left:76px">B0 FC E5 33</span><span class="c" style="left:172px">DB 17</span></div>
<div class="row" style="top:161px"><span class="c" style="left:6px">005290A0</span><span class="c" style="left:76px">07 76 F2 95</span><span class="c" style="left:172px">A0 42</span></div>
<div class="row" style="top:177px"><span class="c" style="left:6px">005290B0</span><span class="c" style="left:76px">4A 37 9F 76</span><span class="c" style="left:172px">AA 07</span></div>
<div class="row" style="top:193px"><span class="c" style="left:6px">005290C0</span><span class="c" style="left:76px">48 4C 61 B0</span><span class="c" style="left:172px">DC D9</span></div>
<div class="row" style="top:209px"><span class="c" style="left:6px">005290D0</span><span class="c" style="left:76px">3C EA 0D 70</span><span class="c" style="left:172px">24 59</span></div>
<div class="row" style="top:225px"><span class="c" style="left:6px">005290E0</span><span class="c" style="left:76px">D1 9D 46 3F</span><span class="c" style="left:172px">47 BF</span></div>
<div class="row" style="top:241px"><span class="c" style="left:6px">005290F0</span><span class="c" style="left:76px">DD 26 38 20</span><span class="c" style="left:172px">4B A4</span></div>
<div class="row" style="top:257px"><span class="c" style="left:6px">00529100</span><span class="c" style="left:76px">3B CD 9A 32</span><span class="c" style="left:172px">B5 0F</span></div>
<div class="row" style="top:273px"><span class="c" style="left:6px">00529110</span><span class="c" style="left:76px">05 55 A3 29</span><span class="c" style="left:172px">75 8F</span></div>
<div class="row" style="top:289px"><span class="c" style="left:6px">00529120</span><span class="c" style="left:76px">4F 34 37 F1</span><span class="c" style="left:172px">BE 76</span></div>
<div class="row" style="top:305px"><span class="c" style="left:6px">00529130</span><span class="c" style="left:76px">7C 01 94 A7</span><span class="c" style="left:172px">5F 27</span></div>
<div class="row" style="top:321px"><span class="c" style="left:6px">00529140</span><span class="c" style="left:76px">A2 3C 01 9C</span><span class="c" style="left:172px">05 15</span></div>
<div class="row" style="top:337px"><span class="c" style="left:6px">00529150</span><span class="c" style="left:76px">B4 65 59 8A</span><span class="c" style="left:172px">EC 58</span></div>
<div class="row" style="top:353px"><span class="c" style="left:6px">00529160</span><span class="c" style="left:76px">1D 81 8D CE</span><span class="c" style="left:172px">3F 63</span></div>
<div class="row" style="top:369px"><span class="c" style="left:6px">00529170</span><span class="c" style="left:76px">BF 40 98 D3</span><span class="c" style="left:172px">C9 64</span></div>
<div class="row" style="top:385px"><span class="c" style="left:6px">00529180</span><span class="c" style="left:76px">BB 48 CB 73</span><span class="c" style="left:172px">CF DF</span></div>
<div class="row" style="top:401px"><span class="c" style="left:6px">00529190</span><span class="c" style="left:76px">16 42 7B C6</span><span class="c" style="left:172px">72 8F</span></div>
<div class="row" style="top:417px"><span class="c" style="left:6px">005291A0</span><span class="c" style="left:76px">07 5C 0B 67</span><span class="c" style="left:172px">CA 29</span></div>
<div class="row" style="top:433px"><span class="c" style="left:6px">005291B0</span><span class="c" style="left:76px">10 DC C1 A9</span><span class="c" style="left:172px">DA 75</span></div>
<div class="row" style="top:449px"><span class="c" style="left:6px">005291C0</span><span class="c" style="left:76px">C8 5D 42 18</span><span class="c" style="left:172px">E0 67</span></div>
<div class="vl" style="left:71px"></div><div class="vl" style="left:167px"></div>
</div>
<div class="sb" style="left:208px;top:515px;width:17px;height:483px"><div style="position:absolute;left:0;top:0"><svg width="17" height="17" viewBox="0 0 17 17" fill="none" stroke="#505050" stroke-width="2.1"><path d="M5 10.3 L8.5 6.8 L12 10.3"/></svg></div><div style="position:absolute;left:0;bottom:0;height:17px"><svg width="17" height="17" viewBox="0 0 17 17" fill="none" stroke="#505050" stroke-width="2.1"><path d="M5 6.8 L8.5 10.3 L12 6.8"/></svg></div><div class="th" style="top:16px;height:17px"></div></div>
<div class="pane mono" style="left:227px;top:514px;width:1674px;height:484px">
<div class="row sel" style="top:0"></div><div class="abs" style="left:0;top:0;width:71px;height:16px;background:#c0c0c0"></div>
<div class="row" style="top:0px"><span class="c k" style="left:6px">0019F22C</span><span class="c" style="left:85px">77BAA59D</span>
<span class="c" style="left:156px"><span class="cj">返回到</span> ntdll.77BAA59D <span class="cj">来自</span> ntdll.ZwTerminateProcess</span>
</div>
<div class="row" style="top:16px"><span class="c " style="left:6px">0019F230</span><span class="c" style="left:85px">FFFFFFFF</span>
</div>
<div class="row" style="top:32px"><span class="c " style="left:6px">0019F234</span><span class="c" style="left:85px">00000000</span>
</div>
<div class="row" style="top:48px"><span class="c " style="left:6px">0019F238</span><span class="c" style="left:85px">000007D8</span>
</div>
<div class="row" style="top:64px"><span class="c " style="left:6px">0019F23C</span><span class="c" style="left:85px">005E7800</span>
<span class="c" style="left:156px">csrss.005E7800</span>
</div>
<div class="row" style="top:80px"><span class="c " style="left:6px">0019F240</span><span class="c" style="left:85px">0046FC30</span>
<span class="c" style="left:156px">csrss.0046FC30</span>
</div>
<div class="row" style="top:96px"><span class="c " style="left:6px">0019F244</span><span class="c" style="left:85px">7788FEC4</span>
<span class="c" style="left:156px">combase.7788FEC4</span>
</div>
<div class="row" style="top:112px"><span class="c " style="left:6px">0019F248</span><span class="c" style="left:85px">77787140</span>
<span class="c" style="left:156px">combase.77787140</span>
</div>
<div class="row" style="top:128px"><span class="c " style="left:6px">0019F24C</span><span class="c" style="left:85px">0019F280</span>
<div class="abs" style="left:77px;top:7px;width:7px;height:1px;background:#c6c6c6"></div><div class="abs" style="left:77px;top:7px;width:1px;height:9px;background:#c6c6c6"></div>
</div>
<div class="row" style="top:144px"><span class="c " style="left:6px">0019F250</span><span class="c" style="left:85px">75D34212</span>
<span class="c" style="left:156px"><span class="cj">返回到</span> oleaut32.75D34212 <span class="cj">来自</span> kernel32.TlsSetValue</span>
<div class="abs" style="left:77px;top:0;width:1px;height:16px;background:#c6c6c6"></div>
</div>
<div class="row" style="top:160px"><span class="c " style="left:6px">0019F254</span><span class="c" style="left:85px">00000017</span>
<div class="abs" style="left:77px;top:0;width:1px;height:16px;background:#c6c6c6"></div>
</div>
<div class="row" style="top:176px"><span class="c " style="left:6px">0019F258</span><span class="c" style="left:85px">00000000</span>
<div class="abs" style="left:77px;top:0;width:1px;height:16px;background:#c6c6c6"></div>
</div>
<div class="row" style="top:192px"><span class="c " style="left:6px">0019F25C</span><span class="c" style="left:85px">0019F29C</span>
<div class="abs" style="left:77px;top:0;width:1px;height:16px;background:#c6c6c6"></div>
</div>
<div class="row" style="top:208px"><span class="c " style="left:6px">0019F260</span><span class="c" style="left:85px">7788EB68</span>
<span class="c" style="left:156px">combase.7788EB68</span>
<div class="abs" style="left:77px;top:0;width:1px;height:16px;background:#c6c6c6"></div>
</div>
<div class="row" style="top:224px"><span class="c " style="left:6px">0019F264</span><span class="c" style="left:85px">776FD615</span>
<span class="c" style="left:156px"><span class="cj">返回到</span> combase.776FD615 <span class="cj">来自</span> oleaut32.OACleanup</span>
<div class="abs" style="left:77px;top:0;width:1px;height:16px;background:#c6c6c6"></div>
</div>
<div class="row" style="top:240px"><span class="c " style="left:6px">0019F268</span><span class="c" style="left:85px">01E0F038</span>
<div class="abs" style="left:77px;top:0;width:1px;height:16px;background:#c6c6c6"></div>
</div>
<div class="row" style="top:256px"><span class="c " style="left:6px">0019F26C</span><span class="c" style="left:85px">01E0F038</span>
<div class="abs" style="left:77px;top:0;width:1px;height:16px;background:#c6c6c6"></div>
</div>
<div class="row" style="top:272px"><span class="c " style="left:6px">0019F270</span><span class="c" style="left:85px">01E0F038</span>
<div class="abs" style="left:77px;top:0;width:1px;height:16px;background:#c6c6c6"></div>
</div>
<div class="row" style="top:288px"><span class="c " style="left:6px">0019F274</span><span class="c" style="left:85px">01E0F038</span>
<div class="abs" style="left:77px;top:0;width:1px;height:16px;background:#c6c6c6"></div>
</div>
<div class="row" style="top:304px"><span class="c " style="left:6px">0019F278</span><span class="c" style="left:85px">01E0F038</span>
<div class="abs" style="left:77px;top:0;width:1px;height:16px;background:#c6c6c6"></div>
</div>
<div class="row" style="top:320px"><span class="c " style="left:6px">0019F27C</span><span class="c" style="left:85px">01E0F038</span>
<div class="abs" style="left:77px;top:0;width:1px;height:16px;background:#c6c6c6"></div>
</div>
<div class="row" style="top:336px"><span class="c " style="left:6px">0019F280</span><span class="c" style="left:85px">0019F2FC</span>
<div class="abs" style="left:77px;top:8px;width:7px;height:1px;background:#c6c6c6"></div><div class="abs" style="left:77px;top:0;width:1px;height:9px;background:#c6c6c6"></div>
</div>
<div class="row" style="top:352px"><span class="c " style="left:6px">0019F284</span><span class="c" style="left:85px">7770029C</span>
<span class="c" style="left:156px"><span class="cj">返回到</span> combase.7770029C <span class="cj">来自</span> combase.77701140</span>
</div>
<div class="row" style="top:368px"><span class="c " style="left:6px">0019F288</span><span class="c" style="left:85px">00000000</span>
</div>
<div class="row" style="top:384px"><span class="c " style="left:6px">0019F28C</span><span class="c" style="left:85px">005E7800</span>
<span class="c" style="left:156px">csrss.005E7800</span>
</div>
<div class="row" style="top:400px"><span class="c " style="left:6px">0019F290</span><span class="c" style="left:85px">777002C5</span>
<span class="c" style="left:156px"><span class="cj">返回到</span> combase.777002C5 <span class="cj">来自</span> combase.7778A990</span>
</div>
<div class="row" style="top:416px"><span class="c " style="left:6px">0019F294</span><span class="c" style="left:85px">772F2FE0</span>
<span class="c" style="left:156px">jmp <span class="cj">到</span> KernelBa.SetEvent</span>
</div>
<div class="row" style="top:432px"><span class="c " style="left:6px">0019F298</span><span class="c" style="left:85px">00000000</span>
</div>
<div class="row" style="top:448px"><span class="c " style="left:6px">0019F29C</span><span class="c" style="left:85px">01E0F038</span>
</div>
<div class="row" style="top:464px"><span class="c " style="left:6px">0019F2A0</span><span class="c" style="left:85px">00000000</span>
</div>
<div class="row" style="top:480px"><span class="c " style="left:6px">0019F2A4</span><span class="c" style="left:85px">0019F2F4</span>
</div>
<div class="vl" style="left:71px"></div><div class="vl" style="left:151px"></div>
</div>
<div class="sb" style="left:1901px;top:514px;width:17px;height:484px"><div style="position:absolute;left:0;top:0"><svg width="17" height="17" viewBox="0 0 17 17" fill="none" stroke="#505050" stroke-width="2.1"><path d="M5 10.3 L8.5 6.8 L12 10.3"/></svg></div><div style="position:absolute;left:0;bottom:0;height:17px"><svg width="17" height="17" viewBox="0 0 17 17" fill="none" stroke="#505050" stroke-width="2.1"><path d="M5 6.8 L8.5 10.3 L12 6.8"/></svg></div><div class="th" style="top:388px;height:17px"></div></div>
<svg class="abs" style="left:0;top:60px" width="260" height="400" viewBox="0 60 260 400" fill="#fb3838">
<path d="M78 80.2 L96 79 L95.1 82.7 L168.6 119 L92 90.1 L89.5 93.9 Z"/>
<path d="M73.1 111.2 L88.9 110.9 L86.7 113.7 L104.4 126.7 L84.3 120.2 L82.4 122.7 Z"/>
<path d="M75.6 187 L91.7 179.9 L92 184 L119.600 189.500 L91.100 192 L90.500 196 Z"/>
<path d="M81.800 271.400 L98.800 270.200 L97 274.200 L116.500 284.800 L94.800 279.500 L92.900 282.600 Z"/>
<path d="M81.200 343.300 L98.800 339.100 L98.200 343 L120.500 352.300 L96 351 L94.500 353.800 Z"/>
<path d="M82.100 427.300 L99.800 422 L100.400 426.400 L159.300 442.500 L98.200 434.100 L96.700 437.500 Z"/>
</svg>
<div class="abs" style="left:0;top:998px;width:1920px;height:1px;background:#c0c0c0"></div><div class="abs" style="left:0;top:999px;width:1920px;height:1px;background:#fff"></div>
<div class="abs" style="left:0;top:1000px;width:1920px;height:20px;background:#f0f0f0"></div>
<div class="ss" style="left:7px;top:1005px;font-weight:bold;color:#ff0000">M1</div>
<div class="ss" style="left:33px;top:1005px;font-weight:bold;color:#000">M2</div>
<div class="ss" style="left:59px;top:1005px;font-weight:bold;color:#000">M3</div>
<div class="ss" style="left:85px;top:1005px;font-weight:bold;color:#000">M4</div>
<div class="ss" style="left:111px;top:1005px;font-weight:bold;color:#000">M5</div>
<div class="ss" style="left:226.5px;top:1008px">Command:</div>
<div class="abs" style="left:291px;top:1002px;width:197px;height:18px;background:#fff;border:1px solid;border-color:#808080 #fff #fff #808080"><div style="position:absolute;left:0;top:0;right:0;bottom:0;border:1px solid;border-color:#696969 #e3e3e3 #e3e3e3 #696969"></div><div style="position:absolute;right:1px;top:1px;width:16px;height:14px;background:#f0f0f0;border:1px solid;border-color:#fff #606060 #606060 #fff"><svg width="14" height="12" viewBox="0 0 14 12" style="position:absolute;left:0;top:0"><path d="M3 4h8l-4 4z" fill="#000"/></svg></div></div>
<div class="abs" style="left:500px;top:1003px;width:1296px;height:17px;border:1px solid;border-color:#a0a0a0 #fff #fff #a0a0a0"></div>
<div class="ss" style="left:1822px;top:1005px;font-weight:bold;color:#ff0000">ESP</div>
<div class="ss" style="left:1858px;top:1005px;font-weight:bold">EBP</div>
<div class="ss" style="left:1891px;top:1005px;font-weight:bold">NONE</div>
<div class="abs" style="left:0;top:1020px;width:1920px;height:20px;background:#c0c0c0"></div>
<div class="abs" style="left:2px;top:1021px;width:1874px;height:19px;border:1px solid;border-color:#808080 #fff #fff #808080"></div>
<div class="abs" style="left:1877px;top:1021px;width:42px;height:19px;border:1px solid;border-color:#808080 #fff #fff #808080"></div>
<div class="ss" style="left:143.500px;top:1024px">0</div>
<div class="abs" style="left:6px;top:1023px;font:400 12.5px/16px 'Liberation Sans','Noto Sans CJK SC',sans-serif;color:#000;white-space:pre">进程已终止，</div>
<div class="abs" style="left:85px;top:1023px;font:400 12.5px/16px 'Liberation Sans','Noto Sans CJK SC',sans-serif;color:#000;white-space:pre">退出代码</div>
<div class="abs" style="left:0;top:1040px;width:1920px;height:8px;background:#080c26"></div>
<div class="abs" style="left:632px;top:1041px;width:160px;height:7px;background:#3a3d52"></div>
<div class="abs" style="left:1916px;top:1040px;width:1px;height:8px;background:#6a6d80"></div>
<div class="abs" style="left:1809px;top:1044.5px;font:12px/14px 'Liberation Sans',sans-serif;color:#fff;letter-spacing:0.3px;white-space:pre">7:58:44</div>
<div class="abs" style="left:1733px;top:980px;font:100 37px/48px 'Liberation Sans','Noto Sans CJK SC',sans-serif;color:#fff;white-space:pre;letter-spacing:3px;transform:skewX(-8deg);transform-origin:left bottom;text-shadow:1px 1px 0 #333">酒入论坛</div>
</body></html>
